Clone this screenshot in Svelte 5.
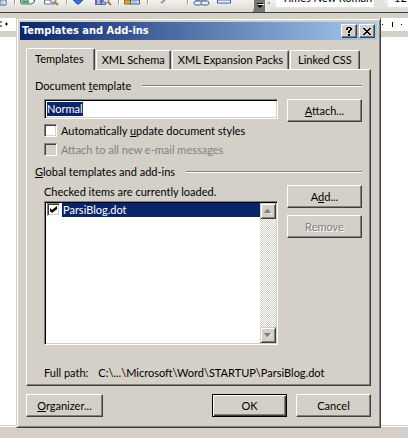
<script>
	const tabs = ["Templates", "XML Schema", "XML Expansion Packs", "Linked CSS"];
	let activeTab = "Templates";

	let template = "Normal";
	let autoUpdate = false;
	let attachToMail = false;

	let addins = [{ name: "ParsiBlog.dot", loaded: true }];
	let selected = 0;
	const startupPath = "C:\\...\\Microsoft\\Word\\STARTUP\\";
</script>

<style>
	:global(body) {
		margin: 0;
		background: #fff;
	}

	.word {
		position: relative;
		display: flex;
		flex-direction: column;
		min-height: 100vh;
		overflow: hidden;
		font-family: Tahoma, Lato, sans-serif;
		font-size: 11px;
		line-height: 14px;
		color: #000;
		background: #fff;
	}

	button, input, select {
		box-sizing: border-box;
		margin: 0;
		font: inherit;
		color: inherit;
	}

	/* application window */
	.toolbar {
		display: flex;
		align-items: flex-end;
		height: 12px;
		overflow: hidden;
		background: linear-gradient(#f3f2ef, #d9d7cf);
		border-bottom: 1px solid #404040;
	}

	.icons {
		flex: none;
		width: 270px;
		height: 12px;
	}

	.combo {
		flex: none;
		width: 109px;
		height: 22px;
		margin: 0 3px 5px 6px;
		padding: 3px 0 0 6px;
		appearance: none;
		border: 0;
		background: linear-gradient(#e4e2dc, #e4e2dc) right / 11px 100% no-repeat #fff;
	}

	.style {
		margin-left: 0;
	}

	.ruler {
		height: 13px;
		padding: 0 2px 0 0;
		border-top: 5px solid #d4d0c8;
		border-bottom: 6px solid #d4d0c8;
		display: flex;
		justify-content: space-between;
		align-items: center;
	}

	.page {
		flex: 1;
	}

	.status {
		height: 11px;
		background: #d4d0c8;
		border-top: 1px solid #fff;
		box-shadow: 0 -1px #d4d0c8;
	}

	/* dialog */
	.dialog {
		position: absolute;
		top: 18px;
		left: 16px;
		right: 27px;
		padding: 2px;
		background: #d4d0c8;
		border: 1px solid;
		border-color: #d4d0c8 #404040 #404040 #d4d0c8;
		box-shadow: inset 1px 1px #fff, inset -1px -1px #808080;
	}

	.dialog > * {
		margin: 1px;
	}

	.titlebar {
		display: flex;
		align-items: center;
		gap: 2px;
		height: 18px;
		padding-right: 2px;
		background: linear-gradient(to right, #0a246a, #a6caf0);
		color: #fff;
	}

	.titlebar h1 {
		flex: 1;
		margin: 0 0 0 2px;
		font-family: Tahoma, "DejaVu Sans Condensed", sans-serif;
		font-size: 11px;
		line-height: 18px;
	}

	.raised {
		background: #d4d0c8;
		border: 1px solid;
		border-color: #fff #404040 #404040 #fff;
		box-shadow: inset -1px -1px #808080;
		padding: 0;
		display: flex;
		align-items: center;
		justify-content: center;
		white-space: nowrap;
	}

	.caption {
		width: 16px;
		height: 14px;
		color: #000;
	}

	.btn {
		width: 75px;
		height: 23px;
	}

	.wide {
		width: 77px;
	}

	.raised:disabled {
		color: #808080;
		text-shadow: 1px 1px #fff;
	}

	.default {
		border-color: #000;
		box-shadow: inset 1px 1px #fff, inset -1px -1px #404040, inset -2px -2px #808080;
	}

	.body {
		padding: 7px 6px;
	}

	.tabs {
		display: flex;
		align-items: flex-end;
		position: relative;
		height: 22px;
		margin-bottom: -1px;
	}

	.tab {
		height: 19px;
		margin-bottom: 1px;
		padding: 0 5px;
		border: 1px solid;
		border-color: #fff #404040 transparent #fff;
		border-bottom: 0;
		border-radius: 2px 2px 0 0;
		box-shadow: inset -1px 0 #808080;
		background: #d4d0c8;
		white-space: nowrap;
		margin-right: 1px;
	}

	.tab.active {
		height: 22px;
		margin-bottom: 0;
		padding: 0 10px 2px 8px;
	}

	.tab:last-child {
		padding: 0 7px;
	}

	.panel {
		display: flex;
		flex-direction: column;
		padding: 9px 8px 5px;
		border: 1px solid;
		border-color: #fff #404040 #404040 #fff;
		box-shadow: inset -1px -1px #808080;
	}

	.heading {
		display: flex;
		align-items: center;
		gap: 11px;
	}

	.heading::after {
		content: "";
		flex: 1;
		border-top: 1px solid #808080;
		border-bottom: 1px solid #fff;
	}

	.columns {
		display: flex;
		gap: 9px;
		padding-left: 9px;
	}

	.fields {
		flex: 1;
		min-width: 0;
	}

	.document {
		margin-top: 6px;
	}

	.sunken {
		border: 1px solid;
		border-color: #808080 #fff #fff #808080;
		box-shadow: inset 1px 1px #000, inset -1px -1px #d4d0c8;
		background: #fff;
	}

	.name {
		height: 20px;
		padding: 2px;
	}

	.name input {
		display: block;
		field-sizing: content;
		height: 14px;
		padding: 0;
		border: 0;
		outline: 0;
		background: #0a246a;
		color: #fff;
	}

	.name, .list {
		box-sizing: border-box;
	}

	.check {
		display: flex;
		align-items: center;
		gap: 4px;
		height: 13px;
		margin-top: 5px;
	}

	.check + .check {
		margin-top: 6px;
	}

	.check.off {
		color: #808080;
	}

	input[type="checkbox"] {
		appearance: none;
		flex: none;
		width: 13px;
		height: 13px;
		border: 1px solid;
		border-color: #808080 #fff #fff #808080;
		box-shadow: inset 1px 1px #404040, inset -1px -1px #d4d0c8;
		background: #fff;
	}

	input[type="checkbox"]:disabled {
		background: #d4d0c8;
	}

	.global {
		margin-top: 9px;
	}

	.addins {
		margin-top: 6px;
	}

	.stack {
		display: flex;
		flex-direction: column;
		gap: 7px;
	}

	.caption-text {
		margin: 0 0 2px;
	}

	.list {
		display: flex;
		height: 144px;
		padding: 1px;
	}

	.items {
		flex: 1;
		margin: 0;
		padding: 0;
		list-style: none;
	}

	.item {
		display: flex;
		gap: 2px;
		padding-left: 1px;
	}

	.box {
		position: relative;
		display: flex;
	}

	.box svg {
		position: absolute;
		top: 3px;
		left: 3px;
		pointer-events: none;
	}

	.item span:last-child {
		flex: 1;
		padding-left: 1px;
	}

	.selected span:last-child {
		background: #0a246a;
		color: #fff;
	}

	.scrollbar {
		display: flex;
		flex-direction: column;
		justify-content: space-between;
		width: 16px;
		background: repeating-conic-gradient(#fff 0 25%, #d4d0c8 0 50%) 0 0 / 2px 2px;
	}

	.scrollbar button {
		width: 16px;
		height: 16px;
		border-color: #d4d0c8 #404040 #404040 #d4d0c8;
		box-shadow: inset 1px 1px #fff, inset -1px -1px #808080;
	}

	.path {
		display: flex;
		gap: 10px;
		margin: 21px 0 0 9px;
	}

	.actions {
		display: flex;
		gap: 9px;
		margin-top: 8px;
	}

	.actions .wide {
		margin-right: auto;
	}
</style>

<div class="word">
	<div class="toolbar">
		<svg class="icons" viewBox="0 0 270 12">
			<path d="M0 0h6v5H0z" fill="#fff" stroke="#3d6795" />
			<path d="M0 2h4M0 4h4" stroke="#7fa3cc" />
			<path d="M14.500 0v5M66.500 0v5M118.500 0v5M147.500 0v5M187.500 0v5" stroke="#a5a297" />
			<path d="M15.500 0v6M67.500 0v6M119.500 0v6M148.500 0v6M188.500 0v6" stroke="#fff" />
			<path d="M20.500 0h14v2l-3 2h-10l-1-2z" fill="#dce6f0" stroke="#50647c" />
			<path d="M22 1h7v2h-7z" fill="#38b82c" />
			<path d="M29 0h4v2h-4z" fill="#f8fafc" />
			<path d="M44.500 0h10v4h-10z" fill="#fff" stroke="#60748c" />
			<circle cx="53" cy="0" r="3" fill="#c8dcf0" stroke="#66788c" />
			<path d="M55 2l3 3" stroke="#b87828" stroke-width="2" />
			<path d="M73 0h10l-4 4h-2z" fill="#3f70d8" stroke="#315fb8" />
			<path d="M95 0h11v5H95z" fill="#6864b8" />
			<path d="M97 1h3M97 3h3M102 3h3" stroke="#fff" />
			<circle cx="106" cy="0" r="3" fill="#c8dcf0" stroke="#66788c" />
			<path d="M108 2l3 3" stroke="#b87828" stroke-width="2" />
			<path d="M124.500 0h7v4h-7z" fill="#e0a52c" stroke="#8f6820" />
			<path d="M130.500 0h9v4h-9z" fill="#e4eefa" stroke="#38588c" />
			<path d="M132 2h5" stroke="#7195c8" />
			<path d="M165 0l-4 3" stroke="#999" stroke-width="2" />
			<circle cx="201" cy="-1" r="5" fill="#88add8" stroke="#55779e" />
			<rect x="194" y="1" width="8" height="4" rx="2" fill="#e8eff6" stroke="#40628c" />
			<rect x="201" y="1" width="8" height="4" rx="2" fill="#e8eff6" stroke="#40628c" />
			<path d="M217.500 0h13v3h-13z" fill="#fff" stroke="#2e59a2" />
			<path d="M221.500 0v3M226.500 0v3" stroke="#a7bfe4" />
			<path d="M254 0h11v12H252q2-1 2-4z" fill="#777" />
			<path d="M257 3h6v1h-6zM257 5h6l-3 3z" fill="#000" />
			<path d="M258 4h6v1h-6z" fill="#fff" />
			<path d="M265 0h5v12h-5z" fill="#e9e7e2" />
			<path d="M268 2h2v2h-2z" fill="#aaa79d" />
		</svg>
		<select class="combo" aria-label="Font">
			<option>Times New Roman</option>
		</select>
		<select class="combo style" aria-label="Font size">
			<option>12</option>
		</select>
	</div>
	<div class="ruler">
		<svg width="10" height="13"><path d="M0 4h2M0 8h2M6 5h1v2H6z" stroke="#000" /></svg>
		<svg width="24" height="13"><path d="M0 6h1v1H0zM10 4h1v5h-1zM19 6h1v1h-1z" fill="#000" /></svg>
	</div>
	<div class="page"></div>
	<div class="status"></div>

	<div class="dialog" role="dialog" aria-labelledby="title">
		<div class="titlebar">
			<h1 id="title">Templates and Add-ins</h1>
			<button type="button" class="raised caption" aria-label="Help">
				<svg width="8" height="9" viewBox="0 0 8 9"><path d="M1 1h1V0h4v1h1v2H6v1H5v2H3V4h1V3h1V1H3v2H1zM3 7h2v2H3z" /></svg>
			</button>
			<button type="button" class="raised caption" aria-label="Close">
				<svg width="8" height="7" viewBox="0 0 8 7"><path d="M0 0h2v1h1v1h2V1h1V0h2v1H7v1H6v1H5v1h1v1h1v1h1v1H6V6H5V5H3v1H2v1H0V6h1V5h1V4h1V3H2V2H1V1H0z" /></svg>
			</button>
		</div>

		<div class="body">
			<div class="tabs" role="tablist">
				{#each tabs as tab}
					<button type="button" role="tab" class="tab" class:active={tab === activeTab} aria-selected={tab === activeTab} on:click={() => (activeTab = tab)}>{tab}</button>
				{/each}
			</div>

			<div class="panel" role="tabpanel">
				<label class="heading" for="template"><span>Document <u>t</u>emplate</span></label>
				<div class="columns document">
					<div class="fields">
						<div class="sunken name"><input id="template" type="text" bind:value={template} /></div>
						<label class="check"><input type="checkbox" bind:checked={autoUpdate} /><span>Automatically <u>u</u>pdate document styles</span></label>
						<label class="check off"><input type="checkbox" disabled bind:checked={attachToMail} /><span>Attach to all new e-mail messages</span></label>
					</div>
					<button type="button" class="raised btn"><span><u>A</u>ttach...</span></button>
				</div>

				<div class="heading global"><span><u>G</u>lobal templates and add-ins</span></div>
				<div class="columns addins">
					<div class="fields">
						<p class="caption-text">Checked items are currently loaded.</p>
						<div class="sunken list">
							<ul class="items">
								{#each addins as addin, i}
									<li>
										<label class="item" class:selected={i === selected}>
											<span class="box">
												<input type="checkbox" bind:checked={addin.loaded} />
												{#if addin.loaded}
													<svg width="7" height="7" viewBox="0 0 7 7"><path d="M0 2l2 2 5-4v3L2 7 0 5z" /></svg>
												{/if}
											</span>
											<span>{addin.name}</span>
										</label>
									</li>
								{/each}
							</ul>
							<div class="scrollbar">
								<button type="button" class="raised" aria-label="Scroll up">
									<svg width="8" height="5" viewBox="0 0 8 5"><path d="M1 5h7v-1z" fill="#fff" /><path d="M0 4h7L4 0H3z" fill="#808080" /></svg>
								</button>
								<button type="button" class="raised" aria-label="Scroll down">
									<svg width="8" height="5" viewBox="0 0 8 5"><path d="M8 1L4 5 3 4l4-4z" fill="#fff" /><path d="M0 0h7L4 4H3z" fill="#808080" /></svg>
								</button>
							</div>
						</div>
					</div>
					<div class="stack">
						<button type="button" class="raised btn"><span>A<u>d</u>d...</span></button>
						<button type="button" class="raised btn" disabled>Remove</button>
					</div>
				</div>

				<div class="path"><span>Full path:</span><span>{startupPath}{addins[selected].name}</span></div>
			</div>

			<div class="actions">
				<button type="button" class="raised btn wide"><span><u>O</u>rganizer...</span></button>
				<button type="button" class="raised btn default">OK</button>
				<button type="button" class="raised btn">Cancel</button>
			</div>
		</div>
	</div>
</div>
